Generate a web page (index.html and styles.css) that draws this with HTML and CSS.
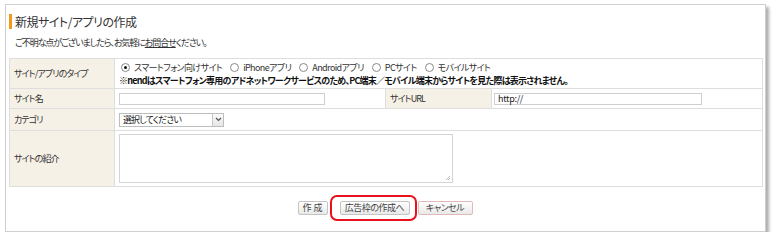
FILE: index.html
```html
<!DOCTYPE html>
<html lang="ja">
<head>
<meta charset="utf-8">
<link rel="stylesheet" href="styles.css">
</head>
<body>
<div class="page">
  <div class="panel">
    <h1 class="title">新規サイト/アプリの作成</h1>
    <p class="lead">ご不明な点がございましたら、お気軽に<a class="link">お問合せ</a>ください。</p>
    <table class="form">
      <colgroup>
        <col class="c-label"><col class="c-val1"><col class="c-label2"><col class="c-val2">
      </colgroup>
      <tr class="r-type">
        <th>サイト/アプリのタイプ</th>
        <td colspan="3">
          <div class="radios">
            <span class="radio on"></span><span class="opt">スマートフォン向けサイト</span>
            <span class="radio"></span><span class="opt">iPhoneアプリ</span>
            <span class="radio"></span><span class="opt">Androidアプリ</span>
            <span class="radio"></span><span class="opt">PCサイト</span>
            <span class="radio"></span><span class="opt">モバイルサイト</span>
          </div>
          <div class="note">※nendはスマートフォン専用のアドネットワークサービスのため、PC端末／モバイル端末からサイトを見た際は表示されません。</div>
        </td>
      </tr>
      <tr class="r-name">
        <th>サイト名</th>
        <td><div class="input w-name"></div></td>
        <th class="th2">サイトURL</th>
        <td class="td-url"><div class="input w-url">http://</div></td>
      </tr>
      <tr class="r-cat">
        <th>カテゴリ</th>
        <td colspan="3">
          <div class="select"><span class="sel-text">選択してください</span><span class="sel-btn"><svg width="7" height="5" viewBox="0 0 7 5"><path d="M1 1 L3.5 3.5 L6 1" fill="none" stroke="#555" stroke-width="1.2"/></svg></span></div>
        </td>
      </tr>
      <tr class="r-desc">
        <th>サイトの紹介</th>
        <td colspan="3"><div class="textarea"><svg class="grip" width="6" height="6" viewBox="0 0 6 6"><path d="M5 1 L1 5 M5 3 L3 5" stroke="#bbb" stroke-width="1"/></svg></div></td>
      </tr>
    </table>
    <div class="actions">
      <span class="btn make">作&nbsp;成</span>
      <span class="ring"><span class="btn">広告枠の作成へ</span></span>
      <span class="btn cancel">キャンセル</span>
    </div>
  </div>
</div>
</body>
</html>
```
FILE: styles.css
```css
html, body {
  margin: 0;
  padding: 0;
  background: #ffffff;
}
body {
  font-family: "Noto Sans CJK JP", "Noto Sans", sans-serif;
  font-feature-settings: "palt";
  color: #333;
}
.page {
  padding: 4px 0 0 5px;
}
.panel {
  box-sizing: border-box;
  width: 761px;
  height: 228px;
  border: 1px solid #cfcfcf;
  box-shadow: 3px 3px 3px rgba(0,0,0,0.32);
  padding: 0 3px;
  background: #fff;
}
.title {
  margin: 9px 0 0 0;
  border-left: 3px solid #f39a1e;
  padding-left: 3px;
  font-size: 12px;
  line-height: 15px;
  letter-spacing: -0.5px;
  font-weight: normal;
  color: #333;
}
.lead {
  margin: 8px 0 0 0;
  padding-left: 6px;
  font-size: 9px;
  line-height: 12px;
  letter-spacing: -1.1px;
  color: #333;
}
.link {
  text-decoration: underline;
  color: #333;
}
.form {
  margin-top: 9px;
  width: 753px;
  border-collapse: collapse;
  table-layout: fixed;
  font-size: 9px;
  letter-spacing: -0.9px;
}
.c-label { width: 105px; }
.c-val1 { width: 271px; }
.c-label2 { width: 106px; }
.c-val2 { width: 271px; }
.form th, .form td {
  border: 1px solid #dedede;
  padding: 0 0 0 4px;
  text-align: left;
  vertical-align: middle;
  font-weight: normal;
}
.form td.td-url { padding-left: 2px; }
.form th {
  background: #f6f1e6;
  color: #333;
}
.r-type { height: 30px; }
.r-name { height: 20px; }
.r-cat { height: 22px; }
.r-desc { height: 56px; }
.radios {
  display: flex;
  align-items: center;
  line-height: 13px;
  padding-left: 2px;
}
.radio {
  box-sizing: border-box;
  width: 9px;
  height: 9px;
  border: 1px solid #8a8a8a;
  border-radius: 50%;
  margin-right: 4px;
  margin-left: 8px;
  display: inline-flex;
  align-items: center;
  justify-content: center;
  background: #fff;
}
.radio:first-child { margin-left: 0; }
.radio.on::after {
  content: "";
  width: 3px;
  height: 3px;
  border-radius: 50%;
  background: #111;
}
.opt {
  color: #333;
  letter-spacing: -0.6px;
}
.note {
  font-weight: bold;
  color: #111;
  line-height: 13px;
  letter-spacing: -0.75px;
  white-space: nowrap;
}
.input {
  box-sizing: border-box;
  height: 12px;
  border: 1px solid #cfcfcf;
  font-size: 9px;
  line-height: 10px;
  letter-spacing: -0.3px;
  padding-left: 3px;
  color: #222;
}
.w-name { width: 206px; }
.w-url { width: 208px; }
.select {
  box-sizing: border-box;
  width: 105px;
  height: 14px;
  border: 1px solid #bdbdbd;
  display: flex;
  align-items: stretch;
}
.sel-text {
  flex: 1;
  line-height: 12px;
  padding-left: 3px;
  color: #222;
}
.sel-btn {
  width: 10px;
  border-left: 1px solid #c8c8c8;
  background: linear-gradient(#fafafa, #e6e6e6);
  display: flex;
  align-items: center;
  justify-content: center;
}
.textarea {
  box-sizing: border-box;
  width: 334px;
  height: 49px;
  border: 1px solid #d4d4d4;
  position: relative;
}
.grip {
  position: absolute;
  right: 1px;
  bottom: 1px;
}
.actions {
  display: flex;
  justify-content: center;
  align-items: center;
  margin-top: 8px;
  padding-right: 1px;
}
.btn {
  box-sizing: border-box;
  height: 14px;
  border: 1px solid #c4c4c4;
  border-radius: 2px;
  background: linear-gradient(#ffffff, #e9e9e9);
  font-size: 9px;
  line-height: 12px;
  letter-spacing: -0.5px;
  color: #444;
  white-space: nowrap;
  text-align: center;
  padding: 0;
}
.make {
  width: 30px;
  margin-right: 2px;
  letter-spacing: 0;
}
.ring {
  display: inline-flex;
  border: 2px solid #e8101a;
  border-radius: 7px;
  padding: 4px 5px 4px 8px;
  margin-right: 1px;
}
.ring .btn {
  width: 70px;
}
.cancel {
  border-color: #e2b8b8;
  width: 55px;
}
```
